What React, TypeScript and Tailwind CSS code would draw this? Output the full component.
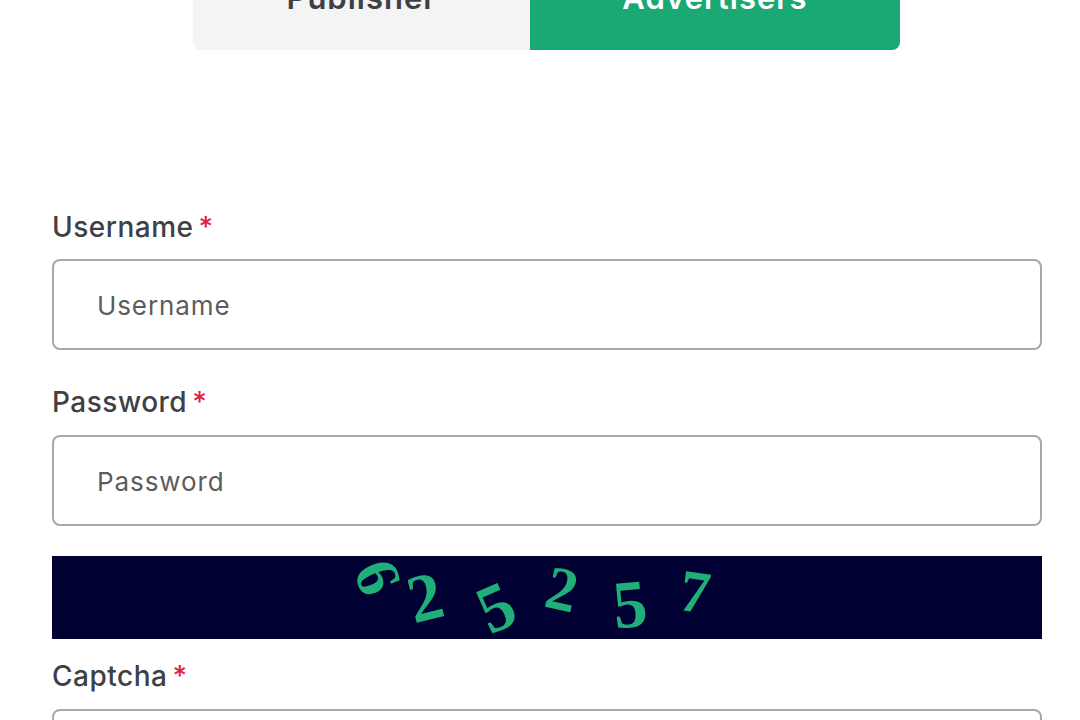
const sans = 'font-["Inter","Noto_Sans",sans-serif]';

const digits = [
  { ch: '6', cls: 'w-[52px] -translate-y-[21px] translate-x-[4px] rotate-[68deg] text-[62px]' },
  { ch: '2', cls: 'w-[50px] -translate-y-[1px] -rotate-[14deg]' },
  { ch: '5', cls: 'w-[92px] translate-y-[9px] -rotate-[24deg]' },
  { ch: '2', cls: 'w-[40px] -translate-y-[9px] rotate-[12deg] text-[62px]' },
  { ch: '5', cls: 'w-[96px] translate-y-[6px] -rotate-[5deg]' },
  { ch: '7', cls: 'w-[36px] -translate-y-[6px] -translate-x-[1px] rotate-[8deg] text-[60px]' },
];

function Field({ label, placeholder, tall }: { label: string; placeholder: string; tall?: boolean }) {
  return (
    <div>
      <div className="flex h-[34px] items-center text-[28px] font-medium leading-none tracking-[0.5px] text-[#3f3f46]">
        {label}
        <span className="ml-[5px] text-[#e11d48]">*</span>
      </div>
      <div
        className={`flex h-[91px] items-center rounded-lg border-2 border-[#a8a8a8] bg-white pl-[43px] pt-[2px] text-[26px] tracking-[0.9px] text-[#5c5c5c] ${
          tall ? 'mt-[16px]' : 'mt-[15px]'
        }`}
      >
        {placeholder}
      </div>
    </div>
  );
}

export default function App() {
  return (
    <div className={`h-[720px] w-[1080px] overflow-hidden bg-white ${sans}`}>
      {/* tabs, page is scrolled so the top is cut off */}
      <div className="-mt-[30px] ml-[193px] flex h-[80px] w-[707px] overflow-hidden rounded-b-lg text-[31px] font-semibold tracking-[1px]">
        <div className="flex w-[337px] justify-center bg-[#f4f4f4] pt-[12px] leading-none text-[#3f3f46]">Publisher</div>
        <div className="flex flex-1 justify-center bg-[#1aa973] pt-[12px] leading-none text-white">Advertisers</div>
      </div>

      <div className="ml-[52px] mt-[160px] w-[990px]">
        <Field label="Username" placeholder="Username" />
        <div className="mt-[35px]">
          <Field label="Password" placeholder="Password" tall />
        </div>

        {/* captcha image */}
        <div className="mt-[30px] flex h-[83px] items-center bg-[#000033] pl-[296px] font-['Liberation_Serif',serif] text-[68px] font-bold leading-none text-[#1fb07a]">
          {digits.map((d, i) => (
            <span key={i} className={`flex justify-center ${d.cls}`}>
              {d.ch}
            </span>
          ))}
        </div>

        <div className="mt-[20px]">
          <Field label="Captcha" placeholder="Captcha" tall />
        </div>
      </div>
    </div>
  );
}
